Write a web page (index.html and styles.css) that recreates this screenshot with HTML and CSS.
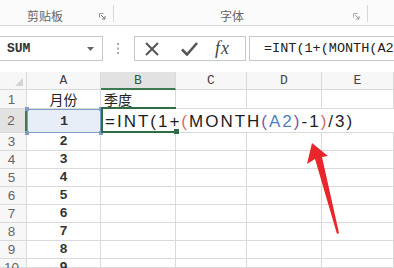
FILE: index.html
```html
<!DOCTYPE html>
<html lang="zh-CN">
<head>
    <meta charset="UTF-8">
    <title>月份季度</title>
    <link rel="stylesheet" href="styles.css">
</head>
<body>
    <div class="ribbon">
        <div class="group clip">
            <span class="label">剪贴板</span>
            <svg class="launcher" width="7" height="7" viewBox="0 0 7 7"><path d="M0.5 0.5h4M0.5 0.5v4" stroke="#999" fill="none"/><path d="M2 2l4 4M6 3v3h-3" stroke="#777" fill="none"/></svg>
        </div>
        <div class="sep"></div>
        <div class="group fontgrp">
            <span class="label">字体</span>
            <svg class="launcher" width="7" height="7" viewBox="0 0 7 7"><path d="M0.5 0.5h4M0.5 0.5v4" stroke="#aaa" fill="none"/><path d="M2 2l4 4M6 3v3h-3" stroke="#999" fill="none"/></svg>
        </div>
        <div class="sep"></div>
    </div>

    <div class="fbar">
        <div class="namebox">
            <span>SUM</span>
            <svg class="caret" width="7" height="4" viewBox="0 0 7 4"><path d="M0 0h7l-3.5 4z" fill="#666"/></svg>
        </div>
        <div class="grip">
            <svg width="2" height="11" viewBox="0 0 2 11"><rect y="0" width="2" height="2" fill="#aaa"/><rect y="4.5" width="2" height="2" fill="#aaa"/><rect y="9" width="2" height="2" fill="#aaa"/></svg>
        </div>
        <div class="fbtns">
            <svg class="cancel" width="14" height="14" viewBox="0 0 14 14"><path d="M1 1l12 12M13 1L1 13" stroke="#555" stroke-width="2"/></svg>
            <svg class="enter" width="17" height="14" viewBox="0 0 17 14"><path d="M1 7.5l5 5L16 1" stroke="#555" stroke-width="2.6" fill="none"/></svg>
            <span class="fx">fx</span>
        </div>
        <div class="finput">=INT(1+(MONTH(A2</div>
    </div>

    <div class="sheet">
        <div class="corner"></div>
        <div class="colhead">A</div>
        <div class="colhead on">B</div>
        <div class="colhead">C</div>
        <div class="colhead">D</div>
        <div class="colhead">E</div>

        <div class="rowhead">1</div>
        <div class="cell mid cjk">月份</div>
        <div class="cell cjk">季度</div>
        <div class="cell"></div>
        <div class="cell"></div>
        <div class="cell"></div>

        <div class="rowhead on">2</div>
        <div class="cell num ref">1
            <span class="h tl"></span><span class="h tr"></span><span class="h bl"></span><span class="h br"></span>
        </div>
        <div class="cell editing">
            <span class="active"><span class="fill"></span></span>
            <span class="formula">=INT(1+<span class="lv2">(</span>MONTH<span class="lv3">(</span><span class="refc">A2</span><span class="lv3">)</span>-1<span class="lv2">)</span>/3)</span>
        </div>

        <div class="rowhead">3</div>
        <div class="cell num">2</div>
        <div class="cell"></div><div class="cell"></div><div class="cell"></div><div class="cell"></div>

        <div class="rowhead">4</div>
        <div class="cell num">3</div>
        <div class="cell"></div><div class="cell"></div><div class="cell"></div><div class="cell"></div>

        <div class="rowhead">5</div>
        <div class="cell num">4</div>
        <div class="cell"></div><div class="cell"></div><div class="cell"></div><div class="cell"></div>

        <div class="rowhead">6</div>
        <div class="cell num">5</div>
        <div class="cell"></div><div class="cell"></div><div class="cell"></div><div class="cell"></div>

        <div class="rowhead">7</div>
        <div class="cell num">6</div>
        <div class="cell"></div><div class="cell"></div><div class="cell"></div><div class="cell"></div>

        <div class="rowhead">8</div>
        <div class="cell num">7</div>
        <div class="cell"></div><div class="cell"></div><div class="cell"></div><div class="cell"></div>

        <div class="rowhead">9</div>
        <div class="cell num">8</div>
        <div class="cell"></div><div class="cell"></div><div class="cell"></div><div class="cell"></div>

        <div class="rowhead">10</div>
        <div class="cell num">9</div>
        <div class="cell"></div><div class="cell"></div><div class="cell"></div><div class="cell"></div>
    </div>

    <!-- red arrow pointing at the formula -->
    <svg class="arrow" width="394" height="268" viewBox="0 0 394 268">
        <polygon points="312,143 307,164 315,159 337,234 339,233 322,157 328,156" fill="#e8262b"/>
    </svg>
</body>
</html>
```
FILE: styles.css
```css
body {
    margin: 0;
    width: 394px;
    height: 268px;
    overflow: hidden;
    position: relative;
    background: #fff;
    font-family: "Liberation Sans", "Noto Sans CJK SC", sans-serif;
}
.ribbon {
    display: flex;
    height: 25px;
    border-bottom: 1px solid #d6d6d6;
    background: #fbfbfb;
}
.group {
    display: flex;
    align-items: flex-end;
    padding-bottom: 1px;
    box-sizing: border-box;
}
.label {
    font-family: "Noto Sans CJK SC", sans-serif;
    font-size: 12px;
    line-height: 16px;
    color: #666;
}
.launcher {
    margin-left: auto;
    margin-right: 7px;
    margin-bottom: 4px;
}
.clip {
    width: 113px;
}
.clip .label {
    margin-left: 27px;
}
.fontgrp {
    width: 253px;
}
.fontgrp .label {
    margin-left: 106px;
}
.sep {
    width: 1px;
    height: 17px;
    margin-top: 5px;
    background: #d8d8d8;
}
.fbar {
    display: flex;
    height: 25px;
    margin-top: 10px;
}
.namebox {
    width: 104px;
    margin-left: -1px;
    border: 1px solid #c8c8c8;
    box-sizing: border-box;
    display: flex;
    align-items: center;
    padding-left: 7px;
    font-family: "Liberation Mono", monospace;
    font-size: 13px;
    font-weight: bold;
    color: #333;
}
.caret {
    margin-left: auto;
    margin-right: 8px;
}
.grip {
    width: 31px;
    display: flex;
    align-items: center;
    padding-left: 14px;
    box-sizing: border-box;
}
.fbtns {
    width: 112px;
    border: 1px solid #c8c8c8;
    box-sizing: border-box;
    display: flex;
    align-items: center;
}
.cancel {
    margin-left: 10px;
}
.enter {
    margin-left: 22px;
}
.fx {
    margin-left: 17px;
    font-family: "Liberation Serif", serif;
    font-style: italic;
    font-size: 18px;
    color: #444;
    letter-spacing: 1px;
}
.finput {
    flex: 1;
    margin-left: 3px;
    margin-right: -2px;
    border: 1px solid #c8c8c8;
    box-sizing: border-box;
    padding-left: 14px;
    display: flex;
    align-items: center;
    white-space: nowrap;
    overflow: hidden;
    font-family: "Liberation Mono", monospace;
    font-size: 13.5px;
    color: #222;
}
.sheet {
    display: grid;
    grid-template-columns: 27px 74px 75px 71px 75px 72px;
    grid-template-rows: 18px 19px 24px repeat(7, 18px) 9px;
    margin-top: 11px;
}
.sheet > div {
    box-sizing: border-box;
    border-right: 1px solid #dadada;
    border-bottom: 1px solid #dadada;
}
.corner {
    background: #f7f7f7;
    position: relative;
}
.corner::after {
    content: "";
    position: absolute;
    right: 3px;
    bottom: 3px;
    border-left: 8px solid transparent;
    border-bottom: 8px solid #d4d4d4;
}
.colhead {
    background: #f7f7f7;
    text-align: center;
    font-family: "Liberation Mono", monospace;
    font-size: 13px;
    line-height: 18px;
    color: #444;
}
.colhead.on {
    background: #e2e2e2;
    border-bottom: 2px solid #3c7a52 !important;
    color: #2f5f3f;
}
.rowhead {
    background: #f7f7f7;
    text-align: center;
    padding-right: 3px;
    font-size: 13.5px;
    color: #666;
    display: flex;
    align-items: center;
    justify-content: center;
}
.rowhead.on {
    background: #e2e2e2;
    border-right: 2px solid #3c7a52 !important;
}
.cell {
    display: flex;
    align-items: center;
    padding-left: 3px;
    font-size: 14px;
    color: #222;
}
.cjk {
    font-family: "Noto Sans CJK SC", sans-serif;
    font-size: 14px;
}
.mid {
    justify-content: center;
    padding-left: 0;
}
.num {
    justify-content: center;
    padding-left: 0;
    font-family: "Liberation Mono", monospace;
    font-weight: bold;
    font-size: 13.5px;
    color: #333;
}
.sheet > .rowhead:nth-last-child(6),
.sheet > .num:nth-last-child(5) {
    align-items: flex-start;
    line-height: 18px;
}
.ref {
    position: relative;
    background: #e7eef8;
    border: 1px solid #7f9cc8 !important;
}
.h {
    position: absolute;
    width: 4px;
    height: 4px;
    background: #7f9cc8;
}
.tl { left: -3px; top: -3px; }
.tr { right: -3px; top: -3px; }
.bl { left: -3px; bottom: -3px; }
.br { right: -3px; bottom: -3px; }
.editing {
    grid-column: 3 / -1;
    position: relative;
    background: #fff;
    border-right: none !important;
    padding-left: 4px;
}
.active {
    position: absolute;
    left: 0;
    top: -2px;
    width: 75px;
    bottom: -1px;
    border-left: 2px solid #2f6b45;
    border-top: 2px solid #2f6b45;
    border-bottom: 2px solid #2f6b45;
    box-sizing: border-box;
}
.fill {
    position: absolute;
    right: -3px;
    bottom: -3px;
    width: 5px;
    height: 5px;
    background: #2f6b45;
}
.formula {
    position: relative;
    font-size: 17px;
    letter-spacing: 2px;
    color: #1e1e1e;
    white-space: nowrap;
    margin-top: 2px;
}
.lv2 {
    color: #d46a6a;
}
.lv3 {
    color: #7d5aa8;
}
.refc {
    color: #4f7fc0;
}
.arrow {
    position: absolute;
    left: 0;
    top: 0;
}
```
